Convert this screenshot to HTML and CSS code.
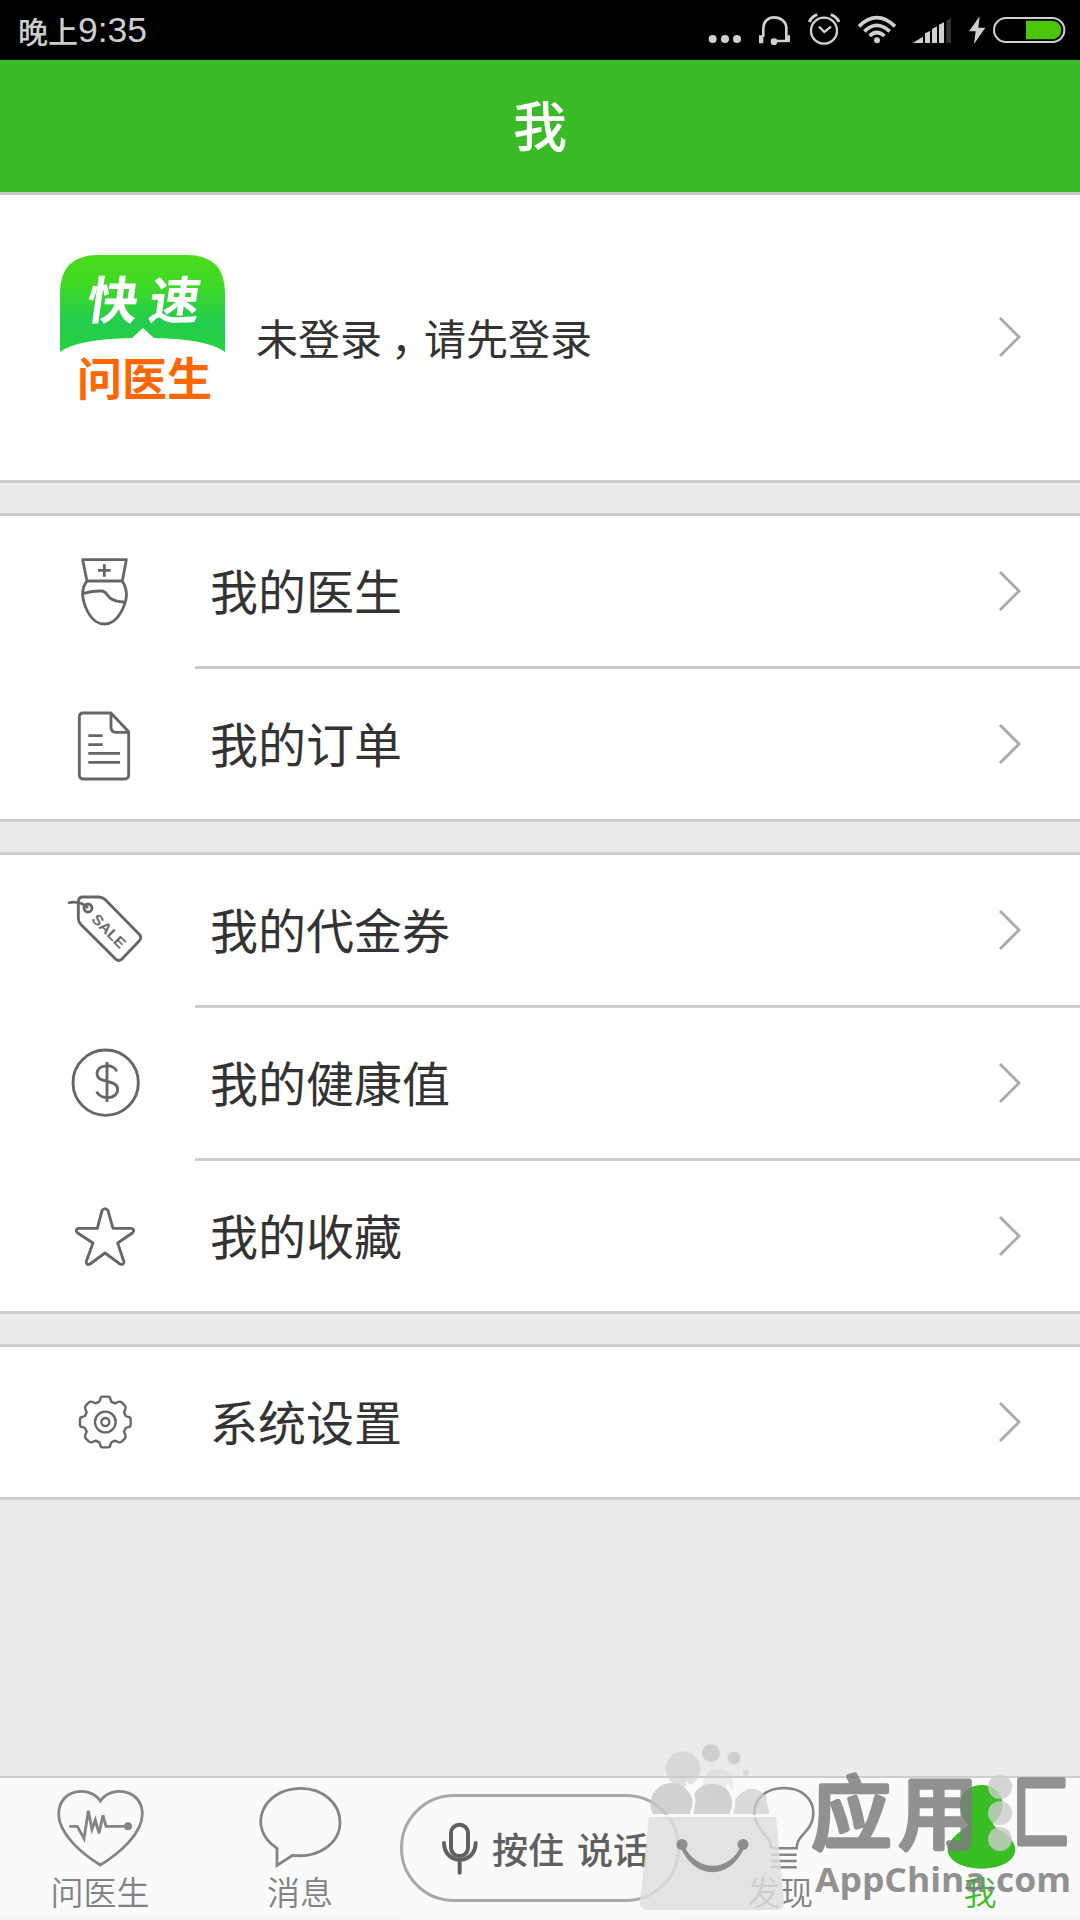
FILE: index.html
```html
<!DOCTYPE html>
<html lang="zh-CN">
<head>
<meta charset="utf-8">
<title>我</title>
<link rel="stylesheet" href="styles.css">
</head>
<body>
<div class="screen">
  <div class="status">
    <div class="clock">晚上<span class="digits">9:35</span></div>
    <svg class="status-icons" viewBox="0 0 1200 180" fill="none" stroke="#d0d0d0">
      <g fill="#d0d0d0" stroke="none"><circle cx="98" cy="117" r="12"/><circle cx="135" cy="117" r="12"/><circle cx="171" cy="117" r="12"/></g>
      <path d="M250 110V84C250 64 265 52 283 52S319 64 319 84V123H283" stroke-width="8"/>
      <path d="M237 106h13v24h-13zM317 106h13v20h-13z" fill="#d0d0d0" stroke="none"/>
      <circle cx="282" cy="125" r="10" fill="#d0d0d0" stroke="none"/>
      <circle cx="432" cy="92" r="39" stroke-width="7"/>
      <path d="M417 80l16 16 20-16" stroke-width="7"/>
      <path d="M388 66Q394 50 412 44M477 66Q470 50 452 44" stroke-width="9"/>
      <g stroke-width="11"><path d="M537 79Q590 27 645 79"/><path d="M553 94Q590 58 629 94"/><path d="M569 108Q590 87 613 108"/></g>
      <circle cx="591" cy="121" r="9" fill="#d0d0d0" stroke="none"/>
      <path d="M698 129L729 110V129zM735 129V100L750 93V129zM756 129V87L771 79V129zM777 129V74L792 67V129z" fill="#d0d0d0" stroke="none"/>
      <path d="M799 129V62L813 53V129z" fill="#333" stroke="none"/>
      <path d="M899 49L867 94H887L882 132L916 83H895z" fill="#d0d0d0" stroke="none"/>
      <rect x="942" y="54" width="211" height="72" rx="36" stroke-width="6"/>
      <path d="M1038 62H1116A28 28 0 0 1 1116 118H1038z" fill="#4bc60b" stroke="none"/>
    </svg>
  </div>
  <header class="titlebar">我</header>

  <section class="profile">
    <svg class="app-logo" viewBox="0 0 165 165">
      <defs><linearGradient id="leaf" x1="0" y1="0" x2="0" y2="1"><stop offset="0" stop-color="#4bdb1d"/><stop offset=".3" stop-color="#40d924"/><stop offset=".7" stop-color="#22cd50"/><stop offset="1" stop-color="#25d33c"/></linearGradient></defs>
      <path d="M0 38Q0 0 38 0H127Q165 0 165 38V97Q148 84 94 83L83 73L72 83Q17 84 0 97z" fill="url(#leaf)"/>
      <g class="logo-top" transform="skewX(-8)"><text x="34" y="64">快</text><text x="96" y="64">速</text></g>
      <text class="logo-bottom" x="17" y="141" textLength="135">问医生</text>
    </svg>
    <div class="login">未登录<span class="comma">，</span>请先登录</div>
    <svg class="chevron" viewBox="0 0 24 42"><path d="M2 2L21 21L2 40"/></svg>
  </section>

  <section class="group">
    <div class="row">
      <svg class="icon" viewBox="69 57 252 252"><path d="M128 89H259L247 153H141zM193 103V140M174 121H212M141 153C120 179 126 211 143 245C160 277 177 282 194 282C212 282 228 275 244 245C264 207 264 181 247 153M131 190Q161 182 185 183C199 184 198 193 210 204Q225 215 252 216"/></svg>
      <div class="label">我的医生</div><svg class="chevron" viewBox="0 0 24 42"><path d="M2 2L21 21L2 40"/></svg>
    </div>
    <div class="row">
      <svg class="icon" viewBox="69 516 252 252"><path d="M213 549H130Q118 549 118 561V734Q118 747 131 747H253Q266 747 266 735V605zM213 549V592Q213 607 228 607H266M145 617H188M145 644H188M145 670H240M145 697H240"/></svg>
      <div class="label">我的订单</div><svg class="chevron" viewBox="0 0 24 42"><path d="M2 2L21 21L2 40"/></svg>
    </div>
  </section>

  <section class="group">
    <div class="row">
      <svg class="icon" viewBox="69 84 252 252"><path d="M126 111H177Q188 112 196 119L299 224Q306 233 298 242L246 297Q236 306 227 297L122 193Q115 186 115 175V124Q116 112 126 111z"/><circle cx="144" cy="144" r="12"/><path d="M84 129Q118 120 144 144"/><text class="sale" transform="translate(152 180) rotate(45)" textLength="124" lengthAdjust="spacingAndGlyphs">SALE</text></svg>
      <div class="label">我的代金券</div><svg class="chevron" viewBox="0 0 24 42"><path d="M2 2L21 21L2 40"/></svg>
    </div>
    <div class="row">
      <svg class="icon" viewBox="69 543 252 252"><circle cx="197" cy="668" r="98"/><path d="M201 606V726M230 634C222 610 173 612 171 640C170 674 234 655 233 689C231 720 181 720 170 695"/></svg>
      <div class="label">我的健康值</div><svg class="chevron" viewBox="0 0 24 42"><path d="M2 2L21 21L2 40"/></svg>
    </div>
    <div class="row">
      <svg class="icon" viewBox="69 42 252 252"><path d="M186 92Q195 80 204 92L219 145H274Q287 149 277 159L233 189L252 246Q250 257 240 252L195 219L150 252Q138 257 139 244L159 189L113 159Q103 148 116 145H172z"/></svg>
      <div class="label">我的收藏</div><svg class="chevron" viewBox="0 0 24 42"><path d="M2 2L21 21L2 40"/></svg>
    </div>
  </section>

  <section class="group">
    <div class="row">
      <svg class="icon gear" viewBox="69 600 252 252"><g transform="translate(196 726)"><path d="M-15-69Q-15-76-8-76H8Q15-76 15-69L18-61L29-56L38-60Q44-63 50-58L58-50Q63-44 60-38L56-29L61-18L69-15Q76-15 76-8V8Q76 15 69 15L61 18L56 29L60 38Q63 44 58 50L50 58Q44 63 38 60L29 56L18 61L15 69Q15 76 8 76H-8Q-15 76-15 69L-18 61L-29 56L-38 60Q-44 63-50 58L-58 50Q-63 44-60 38L-56 29L-61 18L-69 15Q-76 15-76 8V-8Q-76-15-69-15L-61-18L-56-29L-60-38Q-63-44-58-50L-50-58Q-44-63-38-60L-29-56L-18-61z"/><circle r="31"/><circle r="12"/></g></svg>
      <div class="label">系统设置</div><svg class="chevron" viewBox="0 0 24 42"><path d="M2 2L21 21L2 40"/></svg>
    </div>
  </section>

  <nav class="tabs">
    <div class="tab">
      <svg class="tab-icon" viewBox="150 126 300 270"><path d="M301 183C267 134 176 148 176 222C176 281 245 341 301 375C357 341 427 281 427 222C427 148 335 134 301 183z"/><path d="M208 259H232L252 296L265 212L276 268L286 240L297 280L309 226L318 259H385"/><circle class="solid" cx="384" cy="259" r="12"/></svg>
      <span>问医生</span>
    </div>
    <div class="tab">
      <svg class="tab-icon" viewBox="750 126 300 270"><path d="M831 325C736 262 790 145 902 145C970 145 1020 191 1020 247C1020 313 951 355 878 346L831 376z"/></svg>
      <span>消息</span>
    </div>
    <div class="talk">
      <div class="pill">
        <svg class="mic" viewBox="186 243 108 159"><rect x="213" y="251" width="51" height="94" rx="25"/><path d="M192 306C193 373 286 373 287 306M239 359V395"/></svg>
        <span>按住 说话</span>
      </div>
    </div>
    <div class="tab">
      <svg class="tab-icon bulb" viewBox="330 156 300 270"><path d="M455 355H530Q530 333 548 315C568 292 580 279 580 247C579 203 541 174 492 174S403 203 403 247C403 279 417 292 435 315Q451 333 455 355M452 374H530M452 393H530M452 412H530"/></svg>
      <span>发现</span>
    </div>
    <div class="tab active">
      <svg class="tab-icon person" viewBox="450 126 300 270"><path d="M605 135C563 135 540 164 540 197Q540 230 566 254Q559 264 543 274C519 290 503 309 503 330C503 361 548 386 605 386S706 361 706 330C706 306 686 287 664 273Q643 261 638 251Q668 228 668 195C668 161 641 135 605 135z"/></svg>
      <span>我</span>
    </div>
    <svg class="watermark" viewBox="630 1740 450 180">
      <g class="foam">
        <circle cx="683" cy="1769" r="17.5" opacity=".65"/><circle cx="711" cy="1753" r="9"/><circle cx="734" cy="1758" r="6.5"/><circle cx="746" cy="1773" r="3" opacity=".6"/><circle cx="718" cy="1784" r="15" opacity=".35"/>
      </g>
      <path d="M653 1814A21 21 0 1 1 690 1814z" class="bubble"/>
      <path d="M694 1814A20.500 20.500 0 1 1 730 1814z" class="bubble"/>
      <path d="M733 1814V1802A20 20 0 0 1 769 1814z" class="bubble light"/>
      <path d="M691 1814Q699 1797 686 1782M731 1814Q738 1800 727 1785M649 1816H777" class="gap"/>
      <path d="M649 1817H776L784 1902Q784 1910 777 1910H648Q639 1910 640 1901z" class="bag"/>
      <g class="ink">
        <circle cx="682" cy="1844.500" r="5.500"/><circle cx="743" cy="1844.500" r="5.500"/>
        <path d="M680 1846C694 1881 731 1881 745 1846L742 1844C730 1873 696 1873 683 1844z"/>
        <text class="brand" x="812" y="1843">应</text>
        <text class="brand" x="899" y="1843">用</text>
        <text class="brand" transform="translate(1012 1842) scale(.74 1.02)">匚</text>
        <text class="domain" x="815" y="1892" textLength="256" lengthAdjust="spacingAndGlyphs">AppChina.com</text>
      </g>
      <path d="M733 1802Q750 1779 766 1796L769 1814A20 20 0 0 0 733 1802z" class="bubble light"/>
      <g class="drops"><circle cx="1000" cy="1787" r="12"/><circle cx="1000" cy="1813" r="12"/><circle cx="1000" cy="1839" r="12"/></g>
    </svg>
  </nav>
</div>
</body>
</html>
```
FILE: styles.css
```css
* { box-sizing: border-box; }
body {
  margin: 0;
  font-family: "Noto Sans CJK SC", sans-serif;
  color: #333;
}
svg { display: block; flex: none; }
.screen {
  width: 1080px;
  height: 1920px;
  display: flex;
  flex-direction: column;
  background: #ebebeb;
  overflow: hidden;
}
.status {
  height: 60px;
  flex: none;
  display: flex;
  justify-content: space-between;
  align-items: center;
  padding-left: 18px;
  background: #000;
  color: #cdcdcd;
}
.clock {
  display: flex;
  align-items: center;
  font-size: 30px;
  font-weight: 500;
  line-height: 57px;
  height: 56px;
}
.digits {
  font-family: "Liberation Sans", sans-serif;
  font-size: 35.5px;
  font-weight: 400;
  line-height: 60px;
}
.status-icons { width: 400px; height: 60px; }
.titlebar {
  height: 135px;
  flex: none;
  background: #3bba28;
  border-bottom: 3px solid #cacaca;
  color: #fff;
  font-size: 54px;
  font-weight: 500;
  line-height: 128px;
  text-align: center;
}
.profile {
  height: 288px;
  flex: none;
  display: flex;
  align-items: center;
  padding-left: 60px;
  padding-right: 58px;
  background: #fff;
  border-bottom: 3px solid #cdcdcd;
}
.app-logo { width: 165px; height: 165px; }
.logo-top { fill: #fff; font-size: 51px; font-weight: 700; }
.logo-bottom { fill: #ff6500; font-size: 45px; font-weight: 700; }
.login { flex: 1; margin-left: 31px; padding-bottom: 2px; font-size: 42px; }
.comma { padding-left: 9px; margin-right: -9px; }
.chevron {
  width: 24px;
  height: 42px;
  margin-bottom: 1px;
  fill: none;
  stroke: #a9a9a9;
  stroke-width: 2.8;
}
.group {
  flex: none;
  margin-top: 30px;
  background: #fff;
  border-top: 3px solid #cdcdcd;
  border-bottom: 3px solid #cdcdcd;
}
.row {
  height: 150px;
  display: flex;
  align-items: center;
  padding-left: 63px;
  padding-right: 58px;
}
.row + .row {
  height: 153px;
  background: linear-gradient(#cdcdcd, #cdcdcd) 195px 0 / 885px 3px no-repeat;
  padding-top: 3px;
}
.icon {
  width: 84px;
  height: 84px;
  fill: none;
  stroke: #666;
  stroke-width: 8.5;
  stroke-linejoin: round;
}
.gear { stroke-width: 7; }
.sale {
  font: 700 44px "Liberation Sans", sans-serif;
  fill: #6a6a6a;
  stroke: none;
}
.label { flex: 1; margin-left: 63px; padding-bottom: 4px; font-size: 48px; }
.tabs {
  position: relative;
  height: 144px;
  flex: none;
  margin-top: auto;
  display: flex;
  background: linear-gradient(#fafafa 137px, #f1f1f1 140px);
  border-top: 2px solid #cecece;
}
.tab {
  width: 200px;
  display: flex;
  flex-direction: column;
  align-items: center;
  padding-top: 4px;
  color: #828282;
  font-size: 33px;
  font-weight: 350;
  line-height: 38px;
}
.tab-icon {
  width: 100px;
  height: 90px;
  fill: none;
  stroke: #858585;
  stroke-width: 8.5;
}
.tab-icon .solid { fill: #858585; stroke: none; }
.tab-icon.bulb { stroke-width: 7.5; }
.tab-icon.person { fill: #38bd23; stroke: none; }
.active { color: #38bd23; }
.talk { width: 280px; padding-top: 16px; background: #fafafa; }
.pill {
  height: 108px;
  border: 3px solid #a9a9a9;
  border-radius: 54px;
  display: flex;
  align-items: center;
  padding-left: 39px;
  gap: 14px;
  color: #606060;
  font-size: 36px;
  font-weight: 500;
  white-space: nowrap;
  word-spacing: 5px;
}
.mic {
  width: 36px;
  height: 53px;
  fill: none;
  stroke: #606060;
  stroke-width: 12;
  stroke-linecap: round;
}
.watermark {
  position: absolute;
  right: 0;
  bottom: 0;
  width: 450px;
  height: 180px;
}
.foam { fill: #c9c9c9; opacity: .85; }
.bubble { fill: #c8c8c8; opacity: .82; }
.bubble.light { fill: #cfcfcf; opacity: .75; }
.gap { fill: none; stroke: #fafafa; stroke-width: 3; }
.bag { fill: #dedede; opacity: .82; }
.ink { fill: #7c7c7c; opacity: .83; }
.brand {
  font-size: 79px;
  font-weight: 400;
  stroke: #7c7c7c;
  stroke-width: 5.5;
  stroke-linejoin: round;
}
.domain { font: 700 34px "Open Sans", sans-serif; }
.drops { fill: #cdcdcd; opacity: .8; }
```
